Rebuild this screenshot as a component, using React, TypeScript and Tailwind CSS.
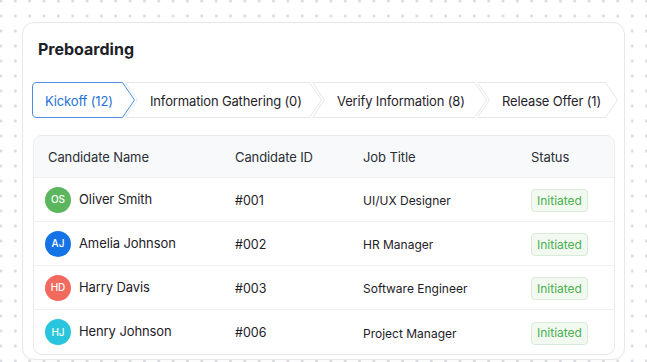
import React from "react";

const tabs = [
  { label: "Kickoff (12)", w: 103, active: true },
  { label: "Information Gathering (0)", w: 197 },
  { label: "Verify Information (8)", w: 175 },
  { label: "Release Offer (1)", w: 141 },
];

const rows = [
  { initials: "OS", name: "Oliver Smith", id: "#001", job: "UI/UX Designer", color: "bg-[#5cb65e]" },
  { initials: "AJ", name: "Amelia Johnson", id: "#002", job: "HR Manager", color: "bg-[#1473e6]" },
  { initials: "HD", name: "Harry Davis", id: "#003", job: "Software Engineer", color: "bg-[#f26a5e]" },
  { initials: "HJ", name: "Henry Johnson", id: "#006", job: "Project Manager", color: "bg-[#29c5dc]" },
];

function Tab({ label, w, active, first }: { label: string; w: number; active?: boolean; first: boolean }) {
  const h = 36;
  const d = first
    ? `M 5,0.5 H ${w - 12.5} L ${w - 0.5},18 L ${w - 12.5},35.5 H 5 Q 0.5,35.5 0.5,31 V 5 Q 0.5,0.5 5,0.5 Z`
    : `M 0.5,0.5 H ${w - 12.5} L ${w - 0.5},18 L ${w - 12.5},35.5 H 0.5 L 12.5,18 Z`;
  return (
    <div
      className={`relative flex h-[36px] shrink-0 items-center pt-[2px] ${first ? "pl-[13px]" : "-ml-[10px] pl-[25px]"}`}
      style={{ width: w }}
    >
      <svg className="absolute left-0 top-0" width={w} height={h} viewBox={`0 0 ${w} ${h}`}>
        <path d={d} fill="#ffffff" stroke={active ? "#4a90e2" : "#e6e8eb"} strokeWidth="1" strokeLinejoin="round" />
      </svg>
      <span className={`relative text-[13px] tracking-[-0.15px] leading-none whitespace-nowrap ${active ? "text-[#1f72d6]" : "text-[#1f2329]"}`}>
        {label}
      </span>
    </div>
  );
}

export default function App() {
  return (
    <div
      className="w-[647px] h-[362px] overflow-hidden bg-white bg-[radial-gradient(circle,#d8dbdf_1.2px,transparent_1.7px)] bg-size-[14.35px_15px] bg-position-[-6.2px_-6.5px] pt-[22px] pl-[22px]"
      style={{ fontFamily: "Inter, 'Noto Sans', sans-serif" }}
    >
      <div className="w-[603px] h-[338px] rounded-[12px] border border-[#e6e8eb] bg-white shadow-[0_1px_3px_rgba(0,0,0,0.03)] px-[9px] pt-[14px]">
        <h1 className="pl-[6px] text-[16px] leading-[24px] font-bold text-[#1d2127]">Preboarding</h1>
        <div className="mt-[21px] flex">
          {tabs.map((t, i) => (
            <Tab key={t.label} label={t.label} w={t.w} active={t.active} first={i === 0} />
          ))}
        </div>
        <div className="mt-[17px] ml-[1px] w-[582px] rounded-[9px] border border-[#e8eaed] overflow-hidden">
          <div className="grid grid-cols-[190px_128px_168px_1fr] h-[42px] items-center bg-[#f8f9fb] border-b border-[#eceef0] px-[11px] pt-[2px] text-[13px] tracking-[-0.1px] text-[#2a2f36]">
            <div className="pl-[3px]">Candidate Name</div>
            <div>Candidate ID</div>
            <div>Job Title</div>
            <div>Status</div>
          </div>
          {rows.map((r, i) => (
            <div
              key={r.id}
              className={`grid grid-cols-[190px_128px_168px_1fr] h-[44px] items-center px-[11px] ${i < rows.length - 1 ? "border-b border-[#eef0f2]" : ""}`}
            >
              <div className="flex items-center gap-[8px]">
                <div className={`flex h-[26px] w-[26px] items-center justify-center rounded-full ${r.color} text-[10px] font-medium text-white`}>
                  {r.initials}
                </div>
                <span className="text-[13px] tracking-[-0.1px] text-[#1d2127]">{r.name}</span>
              </div>
              <div className="text-[12.5px] text-[#1d2127] mt-[3px]">{r.id}</div>
              <div className="text-[12px] text-[#1d2127] mt-[3px]">{r.job}</div>
              <div>
                <span className="inline-flex h-[23px] w-[57px] items-center justify-center rounded-[4px] border border-[#d7ebd6] bg-[#f1f9f0] text-[12px] text-[#4caf50]">
                  Initiated
                </span>
              </div>
            </div>
          ))}
        </div>
      </div>
    </div>
  );
}
